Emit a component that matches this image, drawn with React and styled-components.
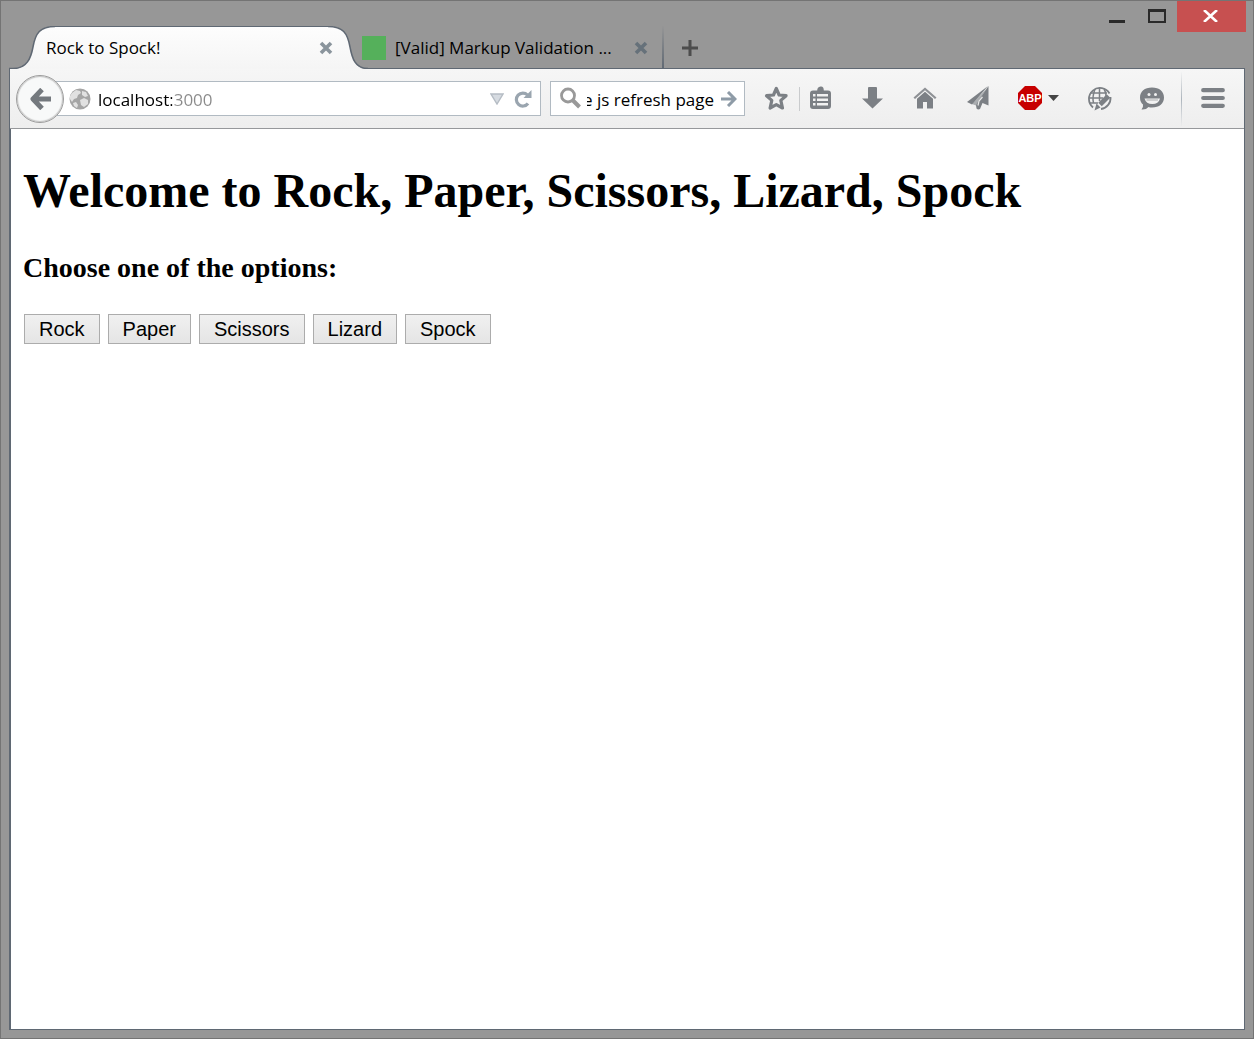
import React, { useEffect, useRef } from "react";
import styled, { createGlobalStyle } from "styled-components";

const chrome = "#979797";
const edge = "#5f6873";
const glyph = "#7c8085";
const fieldBorder = "#b1bac2";
const uiFont = '"Open Sans", "Noto Sans", sans-serif';

const GlobalStyle = createGlobalStyle`
  *, *::before, *::after { box-sizing: border-box; }
  body { margin: 0; background: ${chrome}; }
  button, input { font: inherit; margin: 0; }
  svg { display: block; flex: none; }
`;

const Window = styled.div`
  min-height: 100vh;
  display: flex;
  flex-direction: column;
  border: 1px solid #747474;
  background: ${chrome};
  font: 17px/24px ${uiFont};
`;

const TitleBar = styled.header`
  display: flex;
  justify-content: space-between;
  height: 68px;
  padding: 0 7px 0 8px;
  margin-bottom: -1px;
  position: relative;
  z-index: 1;
`;

const TabStrip = styled.div`
  display: flex;
  align-items: flex-end;
  flex: 1;
  min-width: 0;
`;

const ActiveTab = styled.div`
  display: grid;
  grid-template-columns: 46px 1fr 40px;
  flex: 0 1 359px;
  min-width: 160px;
  height: 43px;
`;

const TabMiddle = styled.div`
  grid-column: 2;
  grid-row: 1;
  border-top: 1px solid ${edge};
  background: linear-gradient(#fdfdfd, #f5f5f5);
`;

const TabEdge = styled.svg`
  grid-column: ${(p) => p.$column};
  grid-row: 1;
`;

const TabContent = styled.div`
  grid-column: 1 / -1;
  grid-row: 1;
  display: flex;
  align-items: center;
  padding: 1px 32px 0 37px;
  z-index: 1;
`;

const InactiveTab = styled.div`
  display: flex;
  align-items: center;
  flex: 0 1 302px;
  min-width: 100px;
  height: 42px;
  margin: 0 0 1px -6px;
  padding: 2px 11px 0 0;
  border-right: 2px solid;
  border-image: linear-gradient(transparent, ${edge}) 1;
  position: relative;
  z-index: 1;
`;

const Favicon = styled.span`
  flex: none;
  width: 24px;
  height: 24px;
  margin-right: 9px;
  background: #55b05b;
`;

const TabTitle = styled.span`
  flex: 1;
  min-width: 0;
  overflow: hidden;
  white-space: nowrap;
  color: #000;
`;

const PlainButton = styled.button`
  display: flex;
  align-items: center;
  justify-content: center;
  flex: none;
  width: ${(p) => p.$width}px;
  height: ${(p) => p.$height}px;
  padding: 0;
  border: 0;
  background: transparent;
`;

const WindowControls = styled.div`
  display: flex;
  align-items: flex-start;
`;

const CloseWindow = styled(PlainButton)`
  padding: 0 2px 1px 0;
  background: #c75050;
`;

const Frame = styled.div`
  flex: 1;
  display: flex;
  flex-direction: column;
  margin: 0 8px 8px;
  border: 1px solid ${edge};
  background: #fff;
`;

const Toolbar = styled.nav`
  display: flex;
  align-items: center;
  height: 60px;
  padding-left: 6px;
  border-bottom: 1px solid #96989b;
  background: linear-gradient(#f6f6f6, #eeeeee);
`;

const ToolButton = styled.button`
  display: flex;
  align-items: center;
  justify-content: center;
  gap: 6px;
  flex: none;
  width: ${(p) => p.$width || 53}px;
  height: 43px;
  padding: 0 1px 1px 0;
  border: 0;
  background: transparent;
`;

const MenuButton = styled(ToolButton)`
  padding-right: 0;
`;

const BackButton = styled(PlainButton)`
  border: 1px solid #9c9c9c;
  border-radius: 50%;
  background: #f8f9f9;
  box-shadow: inset 0 0 1px 1px #c4c4c4;
  position: relative;
  z-index: 1;
`;

const Field = styled.div`
  display: flex;
  align-items: center;
  height: 35px;
  border: 1px solid ${fieldBorder};
  background: #fff;
`;

const AddressField = styled(Field)`
  flex: 1;
  min-width: 160px;
  margin: 0 9px 0 -16px;
  padding: 0 4px 0 20px;
`;

const SearchField = styled(Field)`
  flex: none;
  width: 195px;
  padding-left: 8px;
`;

const TextInput = styled.input`
  flex: 1;
  min-width: 0;
  height: 25px;
  padding: 1px 0 0;
  border: 0;
  outline: 0;
  background: transparent;
  color: #000;
`;

const AddressInput = styled(TextInput)`
  margin-left: 7px;
  background: linear-gradient(to right, #000 74px, #8a8a8a 74px);
  background-clip: text;
  -webkit-background-clip: text;
  -webkit-text-fill-color: transparent;
`;

const SearchInput = styled(TextInput)`
  margin-left: 5px;
`;

const BookmarkGroup = styled.div`
  display: flex;
  align-items: center;
  margin: 0 4px 0 10px;
`;

const Divider = styled.span`
  flex: none;
  width: 1px;
  height: 24px;
  margin-left: 1px;
  background: #c9cbcd;
`;

const MenuDivider = styled(Divider)`
  height: 56px;
  margin-left: 2px;
  background: linear-gradient(transparent, #adb5bd, transparent);
`;

const Page = styled.main`
  flex: 1;
  margin-left: 1px;
  padding: 34px 12px;
  font-family: "Liberation Serif", "Times New Roman", serif;
  color: #000;
  box-shadow: -1px 0 ${edge};
`;

const Heading = styled.h1`
  margin: 0 0 33px;
  font-size: 48px;
  line-height: 56px;
`;

const Prompt = styled.h3`
  margin: 0 0 30px;
  font-size: 28px;
  line-height: 32px;
`;

const Choices = styled.div`
  display: flex;
  flex-wrap: wrap;
  gap: 8px;
  padding-left: 1px;
`;

const Choice = styled.button`
  height: 30px;
  padding: 0 14px;
  border: 1px solid #acacac;
  background: linear-gradient(#f0f0f0, #e5e5e5);
  color: #000;
  font: 20px/28px "Liberation Sans", Arial, sans-serif;
`;

const choices = ["Rock", "Paper", "Scissors", "Lizard", "Spock"];

function TabCloseIcon({ color }) {
  return (
    <svg width="14" height="14" viewBox="0 0 14 14" fill="none" stroke={color} strokeWidth="3.600">
      <path d="M2 2l10 10M12 2L2 12" />
    </svg>
  );
}

function GlobeIcon() {
  return (
    <svg width="22" height="22" viewBox="0 0 22 22">
      <circle cx="11" cy="11" r="10.500" fill="#a5a5a5" />
      <path d="M3 5l4-3 4 1 1 2-3 2-1 3-3 1-2 3-2-3V8zM13 3l4 1 2 4-3 1-3-2zM11 12l4-2 4 2v4l-4 3-3-2zM4 15l3-1 2 3-1 3-3-2z" fill="#e1e1e1" />
    </svg>
  );
}

function SearchInputScrolled() {
  const ref = useRef(null);
  useEffect(() => {
    ref.current.scrollLeft = ref.current.scrollWidth;
  }, []);
  return <SearchInput ref={ref} aria-label="Search" defaultValue="e js refresh page" />;
}

export default function App() {
  return (
    <Window>
      <GlobalStyle />
      <TitleBar>
        <TabStrip>
          <ActiveTab>
            <TabEdge $column={1} width="46" height="43" viewBox="0 0 46 43">
              <defs>
                <linearGradient id="tabFill" x1="0" y1="0" x2="0" y2="1">
                  <stop offset="0" stopColor="#fdfdfd" />
                  <stop offset="1" stopColor="#f5f5f5" />
                </linearGradient>
              </defs>
              <path d="M3 43C18 43 22 32 24 21C26.500 7 31 .5 46 .5V43z" fill="url(#tabFill)" />
              <path d="M0 42.500H4C18 42.500 22 32 24 21C26.500 7 31 .5 46 .5" fill="none" stroke={edge} strokeWidth="1.500" />
            </TabEdge>
            <TabMiddle />
            <TabEdge $column={3} width="40" height="43" viewBox="0 0 40 43">
              <path d="M0 .5C15 .5 19.500 7 22 21C24 32 27 43 40 43H0z" fill="url(#tabFill)" />
              <path d="M0 .5C15 .5 19.500 7 22 21C24 32 27 42.500 40 42.500" fill="none" stroke={edge} strokeWidth="1.500" />
            </TabEdge>
            <TabContent>
              <TabTitle>Rock to Spock!</TabTitle>
              <PlainButton $width={20} $height={20} aria-label="Close tab">
                <TabCloseIcon color="#8a949c" />
              </PlainButton>
            </TabContent>
          </ActiveTab>
          <InactiveTab>
            <Favicon />
            <TabTitle>[Valid] Markup Validation ...</TabTitle>
            <PlainButton $width={20} $height={20} aria-label="Close tab">
              <TabCloseIcon color="#66717a" />
            </PlainButton>
          </InactiveTab>
          <PlainButton $width={52} $height={43} aria-label="New tab">
            <svg width="16" height="16" viewBox="0 0 16 16" stroke="#4d4d4d" strokeWidth="3">
              <path d="M8 0v16M0 8h16" />
            </svg>
          </PlainButton>
        </TabStrip>
        <WindowControls>
          <PlainButton $width={40} $height={31} aria-label="Minimize">
            <svg width="16" height="15" viewBox="0 0 16 15">
              <path d="M0 11h16v3H0z" fill="#2a2a2a" />
            </svg>
          </PlainButton>
          <PlainButton $width={40} $height={30} aria-label="Maximize">
            <svg width="18" height="14" viewBox="0 0 18 14">
              <path d="M0 0h18v14H0zM2 3v9h14V3z" fillRule="evenodd" fill="#2a2a2a" />
            </svg>
          </PlainButton>
          <CloseWindow $width={69} $height={31} aria-label="Close">
            <svg width="15" height="12" viewBox="0 0 15 12" stroke="#fff" strokeWidth="2.600">
              <path d="M1 0l13 12M14 0L1 12" />
            </svg>
          </CloseWindow>
        </WindowControls>
      </TitleBar>
      <Frame>
        <Toolbar>
          <BackButton $width={48} $height={48} aria-label="Back">
            <svg width="22" height="22" viewBox="0 0 22 22" fill="none" stroke="#74797e" strokeWidth="5" strokeLinejoin="round">
              <path d="M13 1.500L4 11l9 9.500M4 11h18" />
            </svg>
          </BackButton>
          <AddressField>
            <GlobeIcon />
            <AddressInput aria-label="Address" defaultValue="localhost:3000" />
            <PlainButton $width={26} $height={30} aria-label="Show history">
              <svg width="14" height="12" viewBox="0 0 14 12">
                <path d="M1 1h12L7 11z" fill="#d6dbe1" stroke="#b5bcc4" strokeWidth="1.400" />
              </svg>
            </PlainButton>
            <PlainButton $width={26} $height={30} aria-label="Reload">
              <svg width="18" height="18" viewBox="0 0 18 18">
                <path d="M13.500 5A6.500 6.500 0 1 0 14 13.500" fill="none" stroke="#9aa5af" strokeWidth="3.200" />
                <path d="M17.500 0v8H9.500z" fill="#9aa5af" />
              </svg>
            </PlainButton>
          </AddressField>
          <SearchField>
            <svg width="23" height="23" viewBox="0 0 23 23" fill="none" stroke="#999">
              <circle cx="9" cy="8.500" r="6.500" strokeWidth="2.800" />
              <path d="M13.500 13l7 7" strokeWidth="4" />
            </svg>
            <SearchInputScrolled />
            <PlainButton $width={30} $height={30} aria-label="Go">
              <svg width="16" height="16" viewBox="0 0 16 16" fill="none" stroke="#8e9ba7" strokeWidth="3">
                <path d="M0 8h13M7 1l7 7-7 7" />
              </svg>
            </PlainButton>
          </SearchField>
          <BookmarkGroup>
            <ToolButton $width={43} aria-label="Bookmark this page">
              <svg width="26" height="26" viewBox="0 0 26 26">
                <path d="M13.300 3.500l2.800 6.500 7 .7-5.300 4.700 1.700 7.600-6.200-3.300-6.200 3.300 1.700-7.600-5.300-4.700 7-.7z" fill="none" stroke={glyph} strokeWidth="3.200" strokeLinejoin="round" />
              </svg>
            </ToolButton>
            <Divider />
            <ToolButton $width={42} aria-label="Bookmarks">
              <svg width="21" height="24" viewBox="0 0 21 24">
                <path d="M3 4.500h4.200q0-3.500 3.300-4t3.300 4H18q3 0 3 3V20q0 3-3 3H3q-3 0-3-3V7.500q0-3 3-3z" fill={glyph} />
                <path d="M3 8h2.500v2.500H3zM7 8h11v2.500H7zM3 12.500h2.500V15H3zM7 12.500h11V15H7zM3 17h2.500v2.500H3zM7 17h11v2.500H7z" fill="#f2f2f2" />
              </svg>
            </ToolButton>
          </BookmarkGroup>
          <ToolButton aria-label="Downloads">
            <svg width="22" height="22" viewBox="0 0 22 22" fill={glyph}>
              <path d="M7 1q0-1 1-1h7q1 0 1 1v10.500h6L11.500 21.500 1 11.500h6z" />
            </svg>
          </ToolButton>
          <ToolButton aria-label="Home">
            <svg width="24" height="22" viewBox="0 0 24 22" fill={glyph}>
              <path d="M12 .5L23.500 10.500 22 12 12 3.200 2 12 .5 10.500z" opacity=".85" />
              <path d="M12 4.800l8 7V21.500h-6v-6.500h-4v6.500H4V11.800z" />
            </svg>
          </ToolButton>
          <ToolButton aria-label="Share this page">
            <svg width="22" height="24" viewBox="0 0 22 24" fill={glyph}>
              <path d="M21 0L0 16l5 2.500z" />
              <path d="M21 1L5 18l4 1.500 3-5z" opacity=".6" />
              <path d="M21.500 0v19.500l-6-2.500-2.500 6q-2 1-3.500-.5l-.5-3.500 3-5z" />
              <path d="M15.500 11l-3.500 4-1 4.500" fill="none" stroke="#e8e8e8" strokeWidth="1.200" />
            </svg>
          </ToolButton>
          <ToolButton $width={68} aria-label="Adblock Plus">
            <svg width="24" height="24" viewBox="0 0 24 24">
              <path d="M7 0h10l7 7v10l-7 7H7l-7-7V7z" fill="#c70000" />
              <text x="12" y="16" textAnchor="middle" fontFamily="Liberation Sans" fontSize="11" fontWeight="bold" fill="#fff">ABP</text>
            </svg>
            <svg width="11" height="6" viewBox="0 0 11 6">
              <path d="M0 0h11L5.500 6z" fill="#454545" />
            </svg>
          </ToolButton>
          <ToolButton aria-label="Web tools">
            <svg width="26" height="26" viewBox="0 0 26 26" fill="none" stroke={glyph} strokeWidth="1.800">
              <path d="M23.500 8.500A11 11 0 1 0 7 22.500M24.500 12a11 11 0 0 1-9.500 12" />
              <path d="M9 4q-3 8-1.500 14M13.500 2.500V16M18 4q2 3 2 7M4 8h17M3 13h14M4 18h8" strokeWidth="1.500" />
              <path d="M22.500 11l-8.500 8.500" strokeWidth="5" />
              <path d="M10.500 18.500l4 4-6 3z" fill={glyph} stroke="none" />
            </svg>
          </ToolButton>
          <ToolButton aria-label="Chat">
            <svg width="24" height="24" viewBox="0 0 24 24">
              <path d="M12 1.500C19.500 1.500 24 5.500 24 11.500S19.500 21.500 12 21.500q-2 0-3.500-.5Q6 24 1.500 23.500 3.500 21.500 3 18.500 0 16 0 11.500C0 5.500 4.500 1.500 12 1.500z" fill={glyph} />
              <circle cx="9" cy="8.500" r="1.500" fill="#f2f2f2" />
              <circle cx="15.500" cy="8.500" r="1.500" fill="#f2f2f2" />
              <path d="M4.500 12.500h15.500q-1.500 5.500-7.700 5.500T4.500 12.500z" fill="#f2f2f2" />
              <path d="M6.500 14h11.500" stroke={glyph} strokeWidth=".6" />
            </svg>
          </ToolButton>
          <MenuDivider />
          <MenuButton $width={62} aria-label="Open menu">
            <svg width="24" height="20" viewBox="0 0 24 20" stroke={glyph} strokeWidth="4.200" strokeLinecap="round">
              <path d="M2.200 2.200h19.600M2.200 10h19.600M2.200 17.800h19.600" />
            </svg>
          </MenuButton>
        </Toolbar>
        <Page>
          <Heading>Welcome to Rock, Paper, Scissors, Lizard, Spock</Heading>
          <Prompt>Choose one of the options:</Prompt>
          <Choices>
            {choices.map((name) => (
              <Choice key={name} type="button">{name}</Choice>
            ))}
          </Choices>
        </Page>
      </Frame>
    </Window>
  );
}
